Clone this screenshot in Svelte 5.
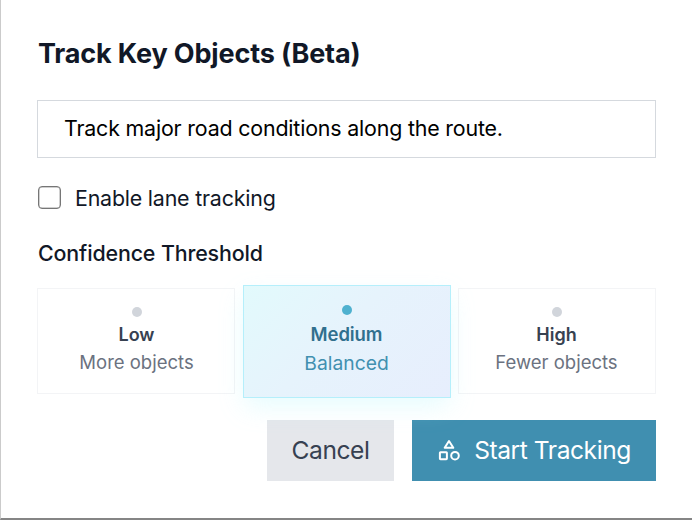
<script>
  const levels = [
    { name: 'Low', note: 'More objects' },
    { name: 'Medium', note: 'Balanced' },
    { name: 'High', note: 'Fewer objects' }
  ];
  let selected = $state('Medium');
  let lane = $state(false);
  let prompt = $state('Track major road conditions along the route.');
</script>

<main class="dialog">
  <h1>Track Key Objects (Beta)</h1>
  <input class="prompt" type="text" bind:value={prompt} />
  <label class="lane">
    <input type="checkbox" bind:checked={lane} />
    <span>Enable lane tracking</span>
  </label>
  <h2>Confidence Threshold</h2>
  <div class="levels">
    {#each levels as level}
      <button class="level" class:active={selected === level.name} onclick={() => (selected = level.name)}>
        <span class="dot"></span>
        <span class="name">{level.name}</span>
        <span class="note">{level.note}</span>
      </button>
    {/each}
  </div>
  <div class="actions">
    <button class="cancel">Cancel</button>
    <button class="start">
      <svg width="24" height="24" viewBox="0 0 24 24" fill="none" stroke="currentColor" stroke-width="2" stroke-linejoin="round">
        <path d="M12 3 16.3 9.8H7.7Z" />
        <rect x="2.9" y="14.2" width="7" height="7" rx="0.6" />
        <circle cx="18" cy="17.7" r="3.8" />
      </svg>
      <span>Start Tracking</span>
    </button>
  </div>
</main>

<style>
  :global(body) {
    background: #fff;
  }
  .dialog {
    box-sizing: border-box;
    width: 692px;
    height: 520px;
    padding: 37px 36px 0 36px;
    border-left: 1px solid #cbcbcb;
    border-bottom: 2px solid #858585;
    background: #fff;
    color: #111827;
    font-family: Inter, 'Liberation Sans', sans-serif;
    overflow: hidden;
  }
  button,
  input {
    font-family: inherit;
    margin: 0;
    border-radius: 0;
  }
  h1 {
    margin: 0;
    padding-left: 1px;
    font-size: 27px;
    line-height: 34px;
    font-weight: 650;
    letter-spacing: -0.15px;
    white-space: nowrap;
  }
  .prompt {
    display: block;
    box-sizing: border-box;
    width: 619px;
    height: 58px;
    margin-top: 29px;
    padding: 0 26px 2px;
    border: 1px solid #d5d9de;
    background: #fff;
    color: #000;
    font-size: 21.4px;
    letter-spacing: -0.18px;
    outline: none;
  }
  .lane {
    display: flex;
    align-items: center;
    height: 24px;
    margin-top: 28px;
    padding-left: 1px;
    font-size: 21.4px;
    letter-spacing: -0.2px;
  }
  .lane input {
    appearance: none;
    box-sizing: border-box;
    width: 23px;
    height: 23px;
    margin: 0 14px 1px 0;
    border: 1px solid #767676;
    border-radius: 4px;
    background: #fff;
    box-shadow: inset 0 0 0 0.5px #a0a0a0;
  }
  h2 {
    margin: 29px 0 0;
    padding-left: 1px;
    font-size: 21.4px;
    line-height: 28px;
    font-weight: 500;
    letter-spacing: -0.13px;
    white-space: nowrap;
  }
  .levels {
    display: flex;
    justify-content: space-between;
    height: 106px;
    margin-top: 21px;
  }
  .level {
    display: flex;
    flex: none;
    flex-direction: column;
    align-items: center;
    box-sizing: border-box;
    width: 198px;
    padding: 18px 0 0;
    border: 1px solid #f3f4f6;
    background: #fff;
    color: #374151;
    white-space: nowrap;
  }
  .level:first-child {
    padding-left: 1px;
  }
  .level:last-child {
    padding-right: 1px;
  }
  .dot {
    width: 10px;
    height: 10px;
    border-radius: 50%;
    background: #d1d5db;
  }
  .name {
    margin-top: 5px;
    font-size: 18px;
    line-height: 26px;
    font-weight: 600;
  }
  .note {
    margin-top: 1px;
    color: #6b7280;
    font-size: 18.5px;
    line-height: 26px;
  }
  .active {
    position: relative;
    width: 208px;
    margin: -3px 0 -4px;
    padding-top: 19px;
    border-color: #b5effb;
    background: linear-gradient(135deg, #e2fafc 0%, #e6f3fc 45%, #e7eefd 100%);
    box-shadow: 0 10px 24px -2px rgba(165, 243, 252, 0.28);
    color: #31708e;
  }
  .active .dot {
    background: #4fb1cf;
  }
  .active .name {
    margin-top: 6px;
    font-size: 18.5px;
    letter-spacing: -0.1px;
  }
  .active .note {
    margin-top: 3px;
    color: #4190b0;
    font-size: 19.3px;
  }
  .actions {
    display: flex;
    justify-content: flex-end;
    gap: 18px;
    margin-top: 26px;
  }
  .actions button {
    display: flex;
    align-items: center;
    justify-content: center;
    height: 61px;
    padding: 0 0 1px;
    border: 0;
    font-size: 24.6px;
    letter-spacing: -0.45px;
    white-space: nowrap;
  }
  .actions .cancel {
    width: 127px;
    background: #e5e7eb;
    color: #374151;
  }
  .actions .start {
    width: 244px;
    gap: 13px;
    background: #408fb0;
    color: #fff;
  }
</style>
